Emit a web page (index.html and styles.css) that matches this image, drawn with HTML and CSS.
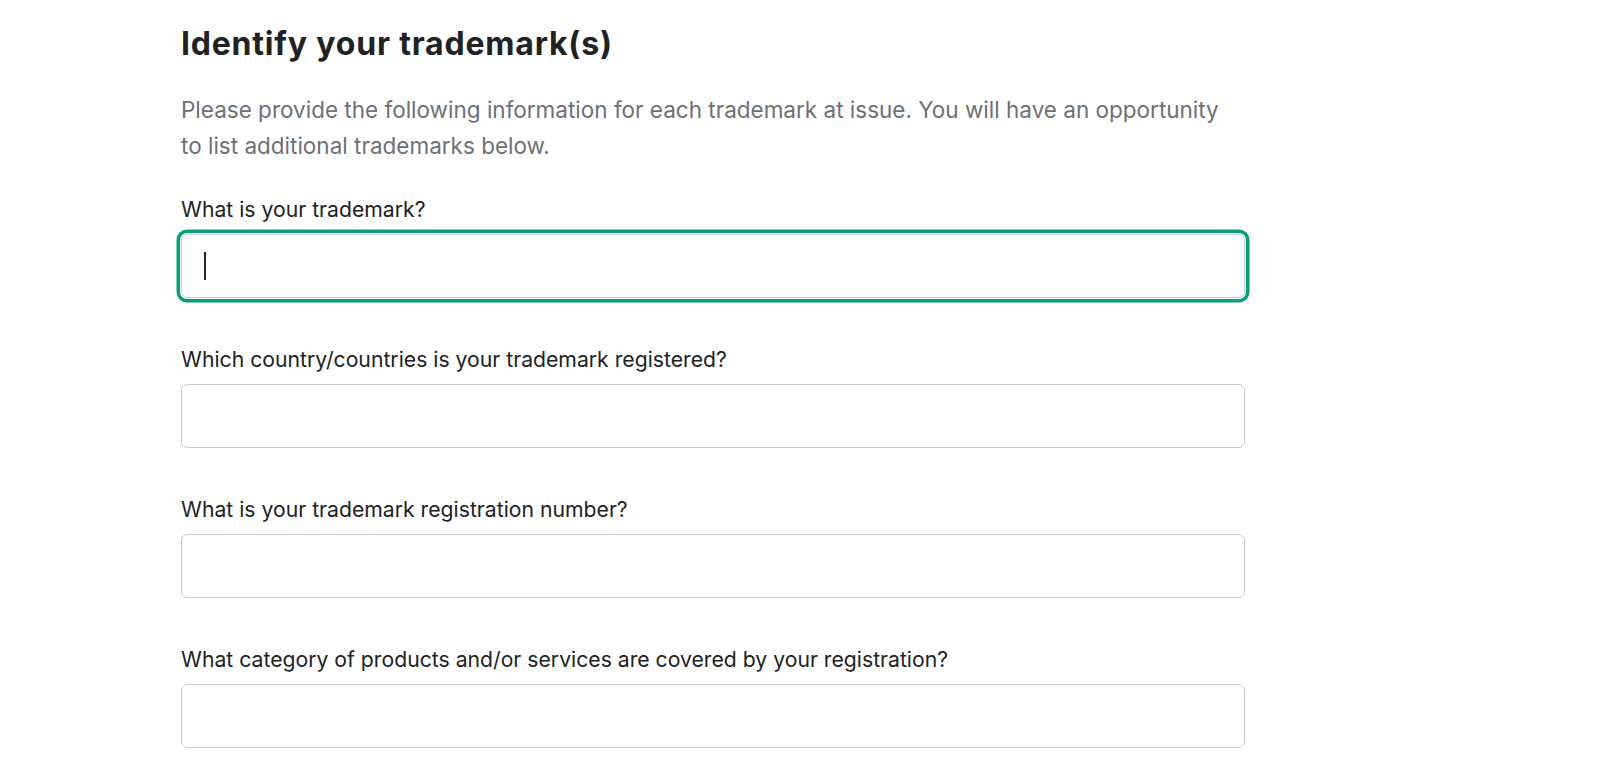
FILE: index.html
```html
<!DOCTYPE html>
<html lang="en">
<head>
<meta charset="utf-8">
<title>Identify your trademark(s)</title>
<link rel="stylesheet" href="styles.css">
</head>
<body>
<main class="page">
  <h1 class="title">Identify your trademark(s)</h1>
  <p class="intro">Please provide the following information for each trademark at issue. You will have an opportunity to list additional trademarks below.</p>
  <form class="fields">
    <div class="field">
      <label class="label">What is your trademark?</label>
      <div class="input is-focused"><span class="caret"></span></div>
    </div>
    <div class="field">
      <label class="label">Which country/countries is your trademark registered?</label>
      <div class="input"></div>
    </div>
    <div class="field">
      <label class="label">What is your trademark registration number?</label>
      <div class="input"></div>
    </div>
    <div class="field">
      <label class="label">What category of products and/or services are covered by your registration?</label>
      <div class="input"></div>
    </div>
  </form>
</main>
</body>
</html>
```
FILE: styles.css
```css
html, body {
  margin: 0;
  padding: 0;
  background: #ffffff;
}
body {
  font-family: Inter, "Noto Sans", "Liberation Sans", sans-serif;
  color: #202223;
}
.page {
  width: 1064px;
  padding: 24px 0 0 181px;
}
.title {
  margin: 0;
  font-size: 32px;
  line-height: 40px;
  font-weight: 650;
  color: #202223;
  letter-spacing: 0.8px;
}
.intro {
  margin: 28px 0 0;
  font-size: 22.5px;
  line-height: 36px;
  color: #6d7175;
  max-width: 1050px;
}
.fields {
  margin-top: 33px;
  display: flex;
  flex-direction: column;
  gap: 49px;
}
.field {
  display: flex;
  flex-direction: column;
  gap: 12px;
}
.label {
  font-size: 21.2px;
  line-height: 25px;
  color: #202223;
}
.input {
  height: 64px;
  box-sizing: border-box;
  border: 1px solid #c9cccf;
  border-radius: 6px;
  background: #fff;
  display: flex;
  align-items: center;
  padding-left: 22px;
}
.input.is-focused {
  box-shadow: 0 0 0 1px #ffffff, 0 0 0 4.5px #0b9e76;
}
.caret {
  width: 2px;
  height: 28px;
  background: #202223;
}
```
